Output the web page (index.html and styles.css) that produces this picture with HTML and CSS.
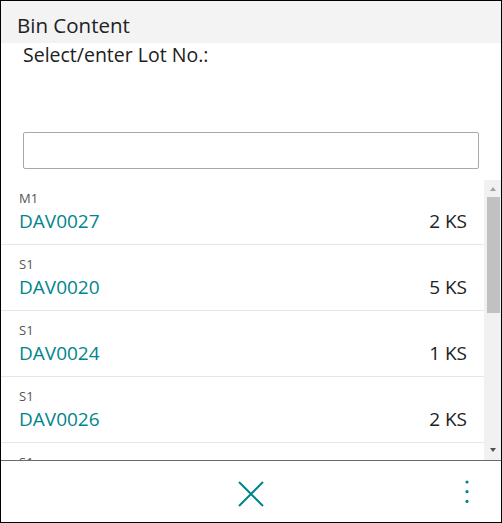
FILE: index.html
```html
<!DOCTYPE html>
<html>
<head>
<meta charset="utf-8">
<link rel="stylesheet" href="styles.css">
</head>
<body>
<div class="window">
  <div class="header">Bin Content</div>
  <div class="prompt">
    <div class="prompt-label">Select/enter Lot No.:</div>
    <div class="input"></div>
  </div>
  <div class="list-area">
    <div class="viewport">
      <div class="list">
        <div class="row"><div class="lbl">M1</div><div class="main"><span class="lot">DAV0027</span><span class="qty">2 KS</span></div></div>
        <div class="row"><div class="lbl">S1</div><div class="main"><span class="lot">DAV0020</span><span class="qty">5 KS</span></div></div>
        <div class="row"><div class="lbl">S1</div><div class="main"><span class="lot">DAV0024</span><span class="qty">1 KS</span></div></div>
        <div class="row"><div class="lbl">S1</div><div class="main"><span class="lot">DAV0026</span><span class="qty">2 KS</span></div></div>
        <div class="row"><div class="lbl">S1</div><div class="main"><span class="lot">DAV0029</span><span class="qty">1 KS</span></div></div>
      </div>
    </div>
    <div class="scrollbar">
      <div class="arrow up"></div>
      <div class="thumb"></div>
      <div class="track"></div>
      <div class="arrow down"></div>
    </div>
  </div>
  <div class="footer">
    <div></div>
    <svg class="close" width="26" height="26" viewBox="0 0 26 26"><path d="M1 1 L25 25 M25 1 L1 25" stroke="#00858c" stroke-width="2" fill="none"/></svg>
    <svg class="more" width="6" height="24" viewBox="0 0 6 24"><circle cx="3" cy="2" r="1.6" fill="#00858c"/><circle cx="3" cy="11.7" r="1.6" fill="#00858c"/><circle cx="3" cy="21.4" r="1.6" fill="#00858c"/></svg>
  </div>
</div>
</body>
</html>
```
FILE: styles.css
```css
html, body { margin: 0; padding: 0; background: #fff; }
body { font-family: "Open Sans", "Noto Sans", sans-serif; color: #212121; }
.window {
  width: 502px; height: 523px; box-sizing: border-box;
  border: 1px solid #000; display: flex; flex-direction: column; overflow: hidden;
}
.header {
  height: 42px; box-sizing: border-box; flex: none;
  background: #f3f3f4; padding: 12px 0 0 16px;
  font-size: 20.5px; line-height: 24px;
}
.prompt { height: 137px; flex: none; box-sizing: border-box; padding: 0 22px; }
.prompt-label { font-size: 19.5px; line-height: 24px; }
.input {
  margin-top: 65px; height: 37px; box-sizing: border-box;
  border: 1px solid #a8a8a8; border-radius: 2px;
}
.list-area { height: 280px; flex: none; display: flex; }
.viewport { flex: 1; overflow: hidden; }
.list { margin-top: -1px; }
.row {
  height: 66px; box-sizing: border-box; padding: 10px 17px 0 18px;
  border-bottom: 1px solid #e6e6e6;
}
.lbl { font-size: 13px; line-height: 18px; color: #555; margin-bottom: 2px; }
.main { display: flex; justify-content: space-between; font-size: 19px; line-height: 24px; }
.lot { color: #00858c; }
.qty { color: #212121; }
.scrollbar { width: 17px; flex: none; background: #f1f1f1; display: flex; flex-direction: column; align-items: center; }
.arrow { width: 0; height: 0; border-left: 3.5px solid transparent; border-right: 3.5px solid transparent; }
.arrow.up { margin-top: 7px; border-bottom: 4px solid #a3a3a3; margin-bottom: 6px; }
.thumb { width: 13px; height: 116px; background: #c1c1c1; margin-left: 1px; }
.track { flex: 1; }
.arrow.down { border-top: 4px solid #505050; margin-bottom: 8px; }
.footer {
  flex: 1; border-top: 1px solid #6a6a6a; box-sizing: border-box;
  display: grid; grid-template-columns: 1fr auto 1fr; align-items: center; padding-top: 4px;
}
.close { display: block; }
.more { display: block; justify-self: end; margin-right: 31px; margin-top: -3px; }
```
